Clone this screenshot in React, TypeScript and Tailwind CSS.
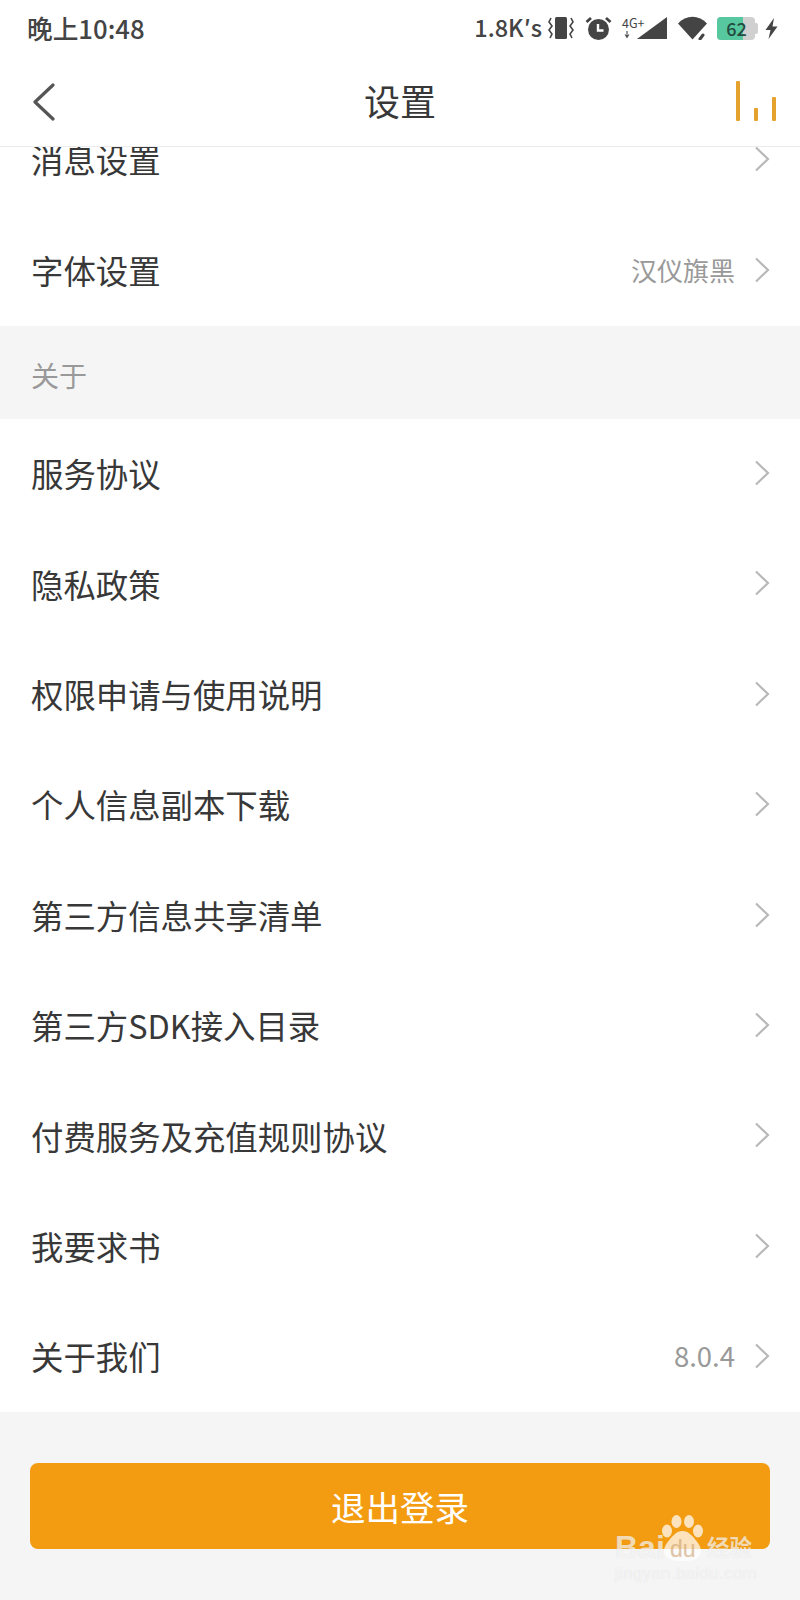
const aboutRows = [
    { label: '服务协议' },
    { label: '隐私政策' },
    { label: '权限申请与使用说明' },
    { label: '个人信息副本下载' },
    { label: '第三方信息共享清单' },
    { label: '第三方SDK接入目录' },
    { label: '付费服务及充值规则协议' },
    { label: '我要求书' },
    { label: '关于我们', value: '8.0.4' },
];

function Row({ label, value }: { label: string; value?: string }) {
    return (
        <div className="flex h-[110.4px] items-center justify-between bg-white pl-[31px] pr-[30px]">
            <span className="pb-[1px] text-[32.4px] leading-none text-[#383838]">{label}</span>
            <div className="flex items-center gap-[19px]">
                {value && (
                    <span className={`pb-[2px] leading-none text-[#999999] ${value === '8.0.4' ? 'text-[27.5px]' : 'text-[26px]'}`}>{value}</span>
                )}
                <svg width="16" height="26" viewBox="0 0 16 26" fill="none" stroke="#b8b8b8" strokeWidth="2.2" className="-mt-[2px]">
                    <path d="M2 1.5 14 13 2 24.5" />
                </svg>
            </div>
        </div>
    );
}

function StatusBar() {
    return (
        <div className="flex h-[56px] items-center justify-between pl-[27px] pr-[22px] text-[#444444]">
            <span className="text-[25.7px] font-medium leading-none">晚上10:48</span>
            <div className="flex items-center">
                <span className="text-[23.5px] font-medium leading-none">1.8K′s</span>
                {/* vibrate */}
                <svg width="26" height="24" viewBox="0 0 26 24" className="ml-[6px]" fill="none" stroke="#444444" strokeWidth="1.6">
                    <rect x="7" y="1" width="12" height="22" rx="1.5" fill="#444444" stroke="none" />
                    <path d="M3 2 1 6l3 4-3 4 3 4-2 4" />
                    <path d="M23 2l2 4-3 4 3 4-3 4 2 4" />
                </svg>
                {/* alarm */}
                <svg width="27" height="24" viewBox="0 0 27 24" className="ml-[11px]">
                    <circle cx="13.500" cy="13.500" r="10.500" fill="#444444" />
                    <path d="M13 8v6.500h5.500" fill="none" stroke="#ffffff" strokeWidth="2.400" />
                    <path d="M1.500 6 6 2M25.500 6 21 2" fill="none" stroke="#444444" strokeWidth="2.800" />
                </svg>
                {/* signal */}
                <div className="relative ml-[10px] h-[24px] w-[45px]">
                    <span className="absolute left-0 top-[1px] text-[12.500px] leading-[12px] text-[#444444]">4G+</span>
                    <svg width="45" height="24" viewBox="0 0 45 24" className="absolute left-0 top-0">
                        <path d="M45 1v22H15z" fill="#444444" />
                        <path d="M5 15v3" stroke="#777777" strokeWidth="1.500" />
                        <path d="M2.500 18.500h5L5 22.500z" fill="#555555" />
                    </svg>
                </div>
                {/* wifi */}
                <svg width="29" height="24" viewBox="0 0 29 24" className="ml-[11px]">
                    <path d="M0 7.500C8-1.500 21-1.500 29 7.500L14.500 23.500z" fill="#444444" />
                    <path d="M22 24 28 16" stroke="#ffffff" strokeWidth="5" />
                    <path d="M22 23 25 19" stroke="#444444" strokeWidth="3" strokeLinecap="round" />
                </svg>
                {/* battery */}
                <div className="ml-[10px] flex items-center">
                    <div className="relative flex h-[23px] w-[38px] overflow-hidden rounded-[4px] bg-[#d0d0d0]">
                        <div className="h-full w-[26px] bg-[#56c79e]" />
                        <span className="absolute inset-0 left-[1px] flex items-center justify-center text-[18px] font-medium leading-none text-[#234a40]">62</span>
                    </div>
                    <div className="h-[11px] w-[3px] rounded-r-[2px] bg-[#d0d0d0]" />
                </div>
                <svg width="13" height="21" viewBox="0 0 13 21" className="ml-[7px]">
                    <path d="M9 0 .5 12h5L3.500 21 12.500 8.500H7.500z" fill="#444444" />
                </svg>
            </div>
        </div>
    );
}

function Watermark() {
    return (
        <div className="absolute left-[615px] top-[1515px] h-[70px] w-[142px] font-['Liberation_Sans'] [text-shadow:0_0_1px_rgba(0,0,0,0.12)]">
            <svg width="41" height="46" viewBox="0 0 41 46" className="absolute left-[47px] top-0" fill="#ffffff" fillOpacity="0.72">
                <ellipse cx="5" cy="16" rx="5" ry="6.500" />
                <ellipse cx="14.500" cy="6.500" rx="5" ry="6.500" />
                <ellipse cx="27" cy="6.500" rx="5" ry="6.500" />
                <ellipse cx="36" cy="16" rx="5" ry="6.500" />
                <path d="M20.500 16c6 0 10 5 14 10 5 6 6 12 2 16-3 3-9 4-16 4s-13-1-16-4c-4-4-3-10 2-16 4-5 8-10 14-10z" />
            </svg>
            <span className="absolute left-0 top-[16px] text-[32px] font-bold leading-none text-white/70">Bai</span>
            <span className="absolute left-[55px] top-[23px] text-[23px] leading-none text-[#e0a868]/50">du</span>
            <span className="absolute left-[92px] top-[20px] font-['Noto_Sans_CJK_SC'] text-[22.500px] font-bold leading-none text-white/70">经验</span>
            <span className="absolute left-0 top-[50px] text-[17px] leading-none tracking-[0.300px] text-white/70">jingyan.baidu.com</span>
        </div>
    );
}

export default function App() {
    return (
        <div className="relative h-[1600px] w-[800px] overflow-hidden bg-[#f5f5f5] font-['Noto_Sans_CJK_SC','Noto_Sans',sans-serif]">
            <div className="relative z-10 bg-white">
                <StatusBar />
                {/* Header */}
                <div className="relative flex h-[91px] items-center justify-center border-b border-[#ececec] pb-[2px]">
                    <svg width="24" height="38" viewBox="0 0 24 38" className="absolute left-[32px] top-[27px]" fill="none" stroke="#555555" strokeWidth="3.200" strokeLinecap="round" strokeLinejoin="round">
                        <path d="M21 2 3 19l18 17" />
                    </svg>
                    <span className="text-[36px] leading-none text-[#383838]">设置</span>
                    <div className="absolute right-[24px] top-[25px] flex h-[40px] items-end gap-[14px]">
                        <div className="h-[40px] w-[4px] rounded-[1px] bg-[#e5a32e]" />
                        <div className="h-[13px] w-[4px] rounded-[1px] bg-[#e5a32e]" />
                        <div className="h-[24px] w-[4px] rounded-[1px] bg-[#e5a32e]" />
                    </div>
                </div>
            </div>

            {/* Scrolled list, first row is partly under the header */}
            <div className="-mt-[42px]">
                <Row label="消息设置" />
                <Row label="字体设置" value="汉仪旗黑" />
                <div className="flex h-[93px] items-center px-[31px] pt-[6px] text-[28px] leading-none text-[#999999]">关于</div>
                {aboutRows.map((row) => (
                    <Row key={row.label} label={row.label} value={row.value} />
                ))}
            </div>

            <div className="px-[30px] pt-[51px]">
                <button className="flex h-[86px] w-full items-center justify-center rounded-[8px] bg-[#f39c12] text-[34.5px] leading-none text-white">
                    退出登录
                </button>
            </div>

            <Watermark />
        </div>
    );
}
